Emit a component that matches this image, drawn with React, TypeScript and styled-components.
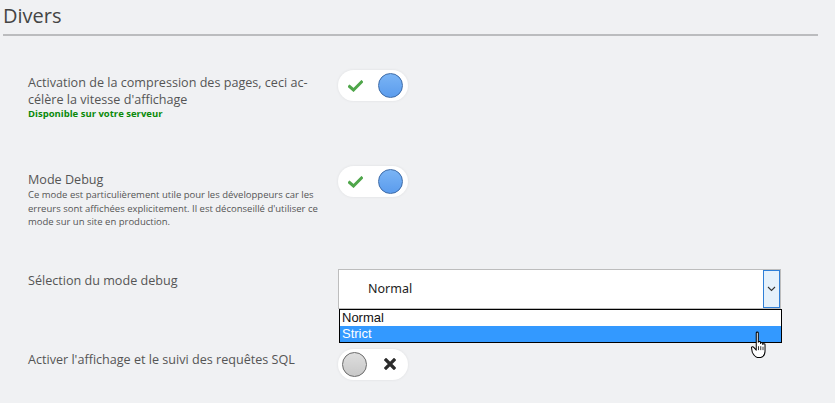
import * as React from "react";
import styled, { createGlobalStyle } from "styled-components";

const GlobalStyle = createGlobalStyle`
  html, body {
    margin: 0;
    padding: 0;
    background: #f0f1f3;
  }
  body {
    font-family: "Open Sans", "Liberation Sans", sans-serif;
    color: #555;
  }
`;

const SPage = styled.div`
  width: 835px;
  height: 403px;
  overflow: hidden;
  padding: 0 17px 0 3px;
  box-sizing: border-box;
`;

const STitle = styled.h2`
  margin: 0;
  padding-top: 2px;
  height: 32px;
  font-size: 20px;
  font-weight: 400;
  line-height: 28px;
  color: #444;
  border-bottom: 2px solid #bbbcbe;
  box-sizing: content-box;
`;

const SList = styled.div`
  display: flex;
  flex-direction: column;
  padding-left: 25px;
`;

interface RowStyle {
  top: number;
}

const SRow = styled.div<RowStyle>`
  display: flex;
  align-items: flex-start;
  margin-top: ${({ top }) => top}px;
`;

interface LabelStyle {
  pad: number;
}

const SLabel = styled.div<LabelStyle>`
  width: 310px;
  flex: none;
  padding-top: ${({ pad }) => pad}px;
  font-size: 12.6px;
  line-height: 17px;
  color: #555;
`;

const SNote = styled.div`
  font-size: 9.5px;
  line-height: 13.5px;
  color: #555;
`;

const SAvailable = styled.div`
  font-size: 9.5px;
  font-weight: 700;
  line-height: 11px;
  color: #0a8a0a;
`;

const SToggle = styled.div`
  width: 70px;
  height: 31px;
  border-radius: 16px;
  background: #fff;
  box-shadow: 0 0 3px rgba(0, 0, 0, 0.08);
  display: flex;
  align-items: center;
  justify-content: space-between;
  padding: 0 5px 0 10px;
  box-sizing: border-box;
`;

const SToggleOff = styled(SToggle)`
  padding: 0 12px 0 4px;
`;

interface KnobStyle {
  on: boolean;
}

const SKnob = styled.div<KnobStyle>`
  width: 23px;
  height: 23px;
  border-radius: 50%;
  border: 1px solid ${({ on }) => (on ? "#3d6ba8" : "#6a6a6a")};
  background: ${({ on }) =>
    on
      ? "linear-gradient(#7ab4f5, #5b9ced)"
      : "linear-gradient(#dedede, #c8c8c8)"};
`;

const SSelectWrap = styled.div`
  position: relative;
  width: 443px;
`;

const SSelect = styled.div`
  height: 40px;
  border: 1px solid #bdbdbd;
  background: #fff;
  display: flex;
  align-items: center;
  box-sizing: border-box;
  font-family: "Noto Sans", "Open Sans", sans-serif;
  font-size: 12.5px;
  color: #222;
`;

const SSelectValue = styled.div`
  flex: 1;
  padding-left: 29px;
`;

const SArrow = styled.div`
  width: 17px;
  height: 38px;
  border: 1px solid #2f7fd7;
  background: #e5f1fb;
  box-sizing: border-box;
  display: flex;
  align-items: center;
  justify-content: center;
`;

const SOptions = styled.div`
  position: absolute;
  left: 1px;
  top: 40px;
  width: 443px;
  border: 1px solid #000;
  background: #fff;
  box-sizing: border-box;
  font-family: "Liberation Sans", Arial, sans-serif;
  font-size: 13px;
  color: #111;
  z-index: 2;
`;

interface OptionStyle {
  active?: boolean;
}

const SOption = styled.div<OptionStyle>`
  height: 16px;
  line-height: 16px;
  padding-left: 2px;
  overflow: hidden;
  background: ${({ active }) => (active ? "#3399ff" : "#fff")};
  color: ${({ active }) => (active ? "#fff" : "#111")};
`;

const SCursor = styled.svg`
  position: absolute;
  left: 411px;
  top: 62px;
  z-index: 3;
`;

const Check = () => (
  <svg width="15" height="12" viewBox="0 0 15 12">
    <path
      d="M1.5 6.5 L5.5 10 L13.5 2"
      fill="none"
      stroke="#4fa64a"
      strokeWidth="3"
      strokeLinecap="square"
      strokeLinejoin="miter"
    />
  </svg>
);

const Cross = () => (
  <svg width="12" height="12" viewBox="0 0 12 12">
    <path
      d="M2 2 L10 10 M10 2 L2 10"
      fill="none"
      stroke="#2b2b2b"
      strokeWidth="3.2"
      strokeLinecap="square"
    />
  </svg>
);

const Chevron = () => (
  <svg width="9" height="6" viewBox="0 0 9 6">
    <path d="M1 1 L4.5 4.5 L8 1" fill="none" stroke="#333" strokeWidth="1.1" />
  </svg>
);

const HandCursor = () => (
  <SCursor width="19" height="27" viewBox="0 0 14 24">
    <path
      d="M5 1.5 C5 0.7 6.8 0.7 6.8 1.5 V10 C7 9 8.8 9 8.8 10 V11 C9 10 10.8 10 10.8 11 V12 C11 11 12.8 11 12.8 12 V18 C12.8 21 11 23 9 23.5 H6 C4 23 2.5 21 1.5 19 L0.8 15 C0.6 14 2.2 13.6 2.8 14.6 L5 17 Z"
      fill="#fff"
      stroke="#000"
      strokeWidth="0.9"
      strokeLinejoin="round"
    />
    <path d="M7 13.5 V17 M9 13.5 V17 M11 14 V17" stroke="#000" strokeWidth="0.7" />
  </SCursor>
);

const App = () => (
  <>
    <GlobalStyle />
    <SPage>
      <STitle>Divers</STitle>
      <SList>
        <SRow top={34}>
          <SLabel pad={4}>
            Activation de la compression des pages, ceci ac-
            <br />
            célère la vitesse d'affichage
            <SAvailable>Disponible sur votre serveur</SAvailable>
          </SLabel>
          <SToggle>
            <Check />
            <SKnob on />
          </SToggle>
        </SRow>

        <SRow top={47}>
          <SLabel pad={5}>
            Mode Debug
            <SNote>
              Ce mode est particulièrement utile pour les développeurs car les
              <br />
              erreurs sont affichées explicitement. Il est déconseillé d'utiliser ce
              <br />
              mode sur un site en production.
            </SNote>
          </SLabel>
          <SToggle>
            <Check />
            <SKnob on />
          </SToggle>
        </SRow>

        <SRow top={40}>
          <SLabel pad={3}>Sélection du mode debug</SLabel>
          <SSelectWrap>
            <SSelect>
              <SSelectValue>Normal</SSelectValue>
              <SArrow>
                <Chevron />
              </SArrow>
            </SSelect>
            <SOptions>
              <SOption>Normal</SOption>
              <SOption active>Strict</SOption>
            </SOptions>
            <HandCursor />
          </SSelectWrap>
        </SRow>

        <SRow top={40}>
          <SLabel pad={2}>Activer l'affichage et le suivi des requêtes SQL</SLabel>
          <SToggleOff>
            <SKnob on={false} />
            <Cross />
          </SToggleOff>
        </SRow>
      </SList>
    </SPage>
  </>
);

export default App;
